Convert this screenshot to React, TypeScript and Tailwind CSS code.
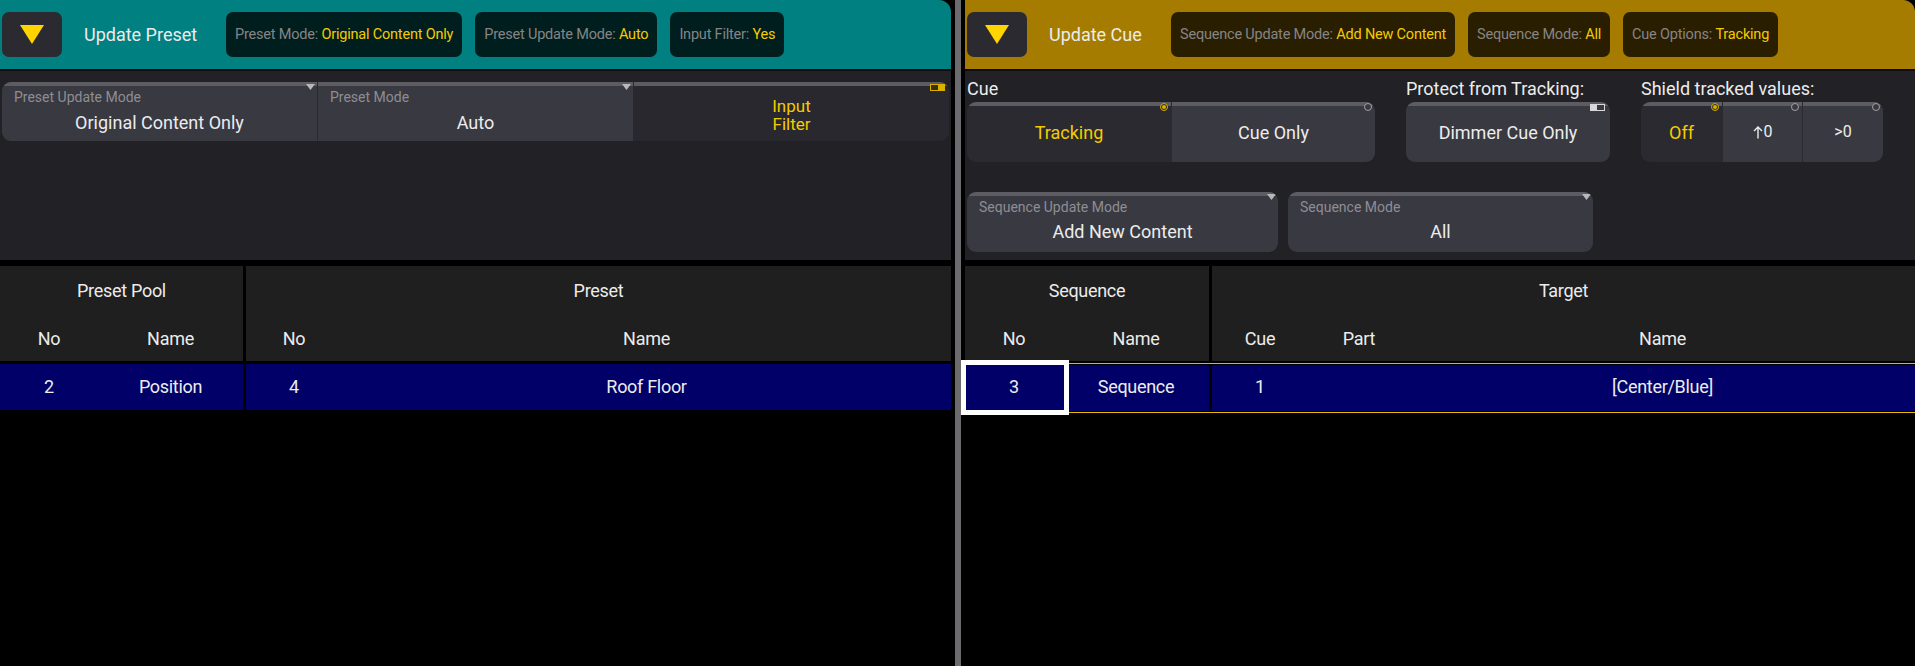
import React from "react";

const font = { fontFamily: "Roboto, 'Noto Sans', sans-serif" };

function DropBtn() {
  return (
    <div className="w-[60px] h-[45px] bg-[#2a2a30] rounded-[7px] flex items-center justify-center">
      <svg width="24" height="19" viewBox="0 0 24 19">
        <polygon points="0,0 24,0 12,19" fill="#ffd400" />
      </svg>
    </div>
  );
}

function Chip({ label, value, bg }: { label: string; value: string; bg: string }) {
  return (
    <div className={`h-[45px] rounded-[7px] px-[9px] flex items-center text-[14.5px] tracking-[-0.2px] whitespace-nowrap ${bg}`}>
      <span className="text-[#858585]">{label}:&nbsp;</span>
      <span className="text-[#f2cc00]">{value}</span>
    </div>
  );
}

function DownTri() {
  return (
    <svg className="absolute right-[2px] top-[2px]" width="9" height="6" viewBox="0 0 9 6">
      <polygon points="0,0 9,0 4.5,6" fill="#b8b8bc" />
    </svg>
  );
}

function Radio({ on }: { on: boolean }) {
  return (
    <div
      className={`absolute right-[3px] top-[1px] w-[8px] h-[8px] rounded-full border ${
        on ? "border-[#d9b200] bg-[#2a2a30]" : "border-[#a0a0a4] bg-[#393942]"
      } flex items-center justify-center`}
    >
      {on && <div className="w-[4px] h-[4px] rounded-full bg-[#d9b200]" />}
    </div>
  );
}

function SelectBtn({ label, value, w, pb = "pb-[6px]" }: { label: string; value: string; w: string; pb?: string }) {
  return (
    <div className={`relative ${w} h-full bg-[#393942] flex flex-col`}>
      <div className="h-[4px] bg-[#5c5c62]" />
      <DownTri />
      <div className="text-[14px] text-[#8e8e92] pl-[12px] pt-[3px] leading-[17px]">{label}</div>
      <div className={`flex-1 flex items-center justify-center text-[18px] text-[#ececec] ${pb}`}>{value}</div>
    </div>
  );
}

function UpArrow() {
  return (
    <svg width="10" height="13" viewBox="0 0 10 13" className="mr-[1px]">
      <path d="M5 12.5V1M1 5L5 1L9 5" stroke="#ececec" strokeWidth="1.4" fill="none" />
    </svg>
  );
}

function LeftPanel() {
  return (
    <div className="w-[951px] flex flex-col">
      <div className="h-[69px] bg-[#008080] rounded-tr-[12px] flex items-center pl-[2px] gap-[13px]">
        <DropBtn />
        <div className="text-[18px] text-[#ececec] w-[138px] pl-[9px]">Update Preset</div>
        <Chip label="Preset Mode" value="Original Content Only" bg="bg-[#001e1e]" />
        <Chip label="Preset Update Mode" value="Auto" bg="bg-[#001e1e]" />
        <Chip label="Input Filter" value="Yes" bg="bg-[#001e1e]" />
      </div>
      <div className="h-[2px] bg-[#0c0c0e]" />
      <div className="h-[189px] bg-[#212126] pt-[11px] px-[2px]">
        <div className="h-[59px] flex rounded-[9px] overflow-hidden gap-[1px] bg-[#28282e]">
          <SelectBtn label="Preset Update Mode" value="Original Content Only" w="w-[315px]" pb="pb-[2px]" />
          <SelectBtn label="Preset Mode" value="Auto" w="w-[315px]" pb="pb-[2px]" />
          <div className="relative flex-1 bg-[#28282e] flex flex-col">
            <div className="h-[4px] bg-[#5c5c62]" />
            <div className="absolute right-[4px] top-[2px] w-[15px] h-[7px] bg-[#d9b200] p-[1px]">
              <div className="w-[7px] h-full bg-[#3a3000]" />
            </div>
            <div className="flex-1 flex flex-col items-center justify-center text-[17px] text-[#f2cc00] leading-[18px] text-center pt-[2px]">
              <span>Input</span>
              <span>Filter</span>
            </div>
          </div>
        </div>
      </div>
      <div className="h-[6px] bg-black" />
      <div className="flex h-[95px] text-[18px] tracking-[-0.3px] text-[#ececec]">
        <div className="w-[243px] bg-[#1f1f1f] flex flex-col">
          <div className="flex-1 flex items-center justify-center pt-[2px]">Preset Pool</div>
          <div className="flex-1 flex items-center pt-[2px]">
            <div className="w-[98px] text-center">No</div>
            <div className="flex-1 text-center">Name</div>
          </div>
        </div>
        <div className="w-[3px] bg-black" />
        <div className="flex-1 bg-[#1f1f1f] flex flex-col">
          <div className="flex-1 flex items-center justify-center pt-[2px]">Preset</div>
          <div className="flex-1 flex items-center pt-[2px]">
            <div className="w-[96px] text-center">No</div>
            <div className="flex-1 text-center">Name</div>
          </div>
        </div>
      </div>
      <div className="h-[3px] bg-black" />
      <div className="flex h-[46px] text-[18px] tracking-[-0.3px] text-[#ececec]">
        <div className="w-[243px] bg-[#000068] flex items-center pb-[2px]">
          <div className="w-[98px] text-center">2</div>
          <div className="flex-1 text-center">Position</div>
        </div>
        <div className="w-[3px] bg-black" />
        <div className="flex-1 bg-[#000068] flex items-center pb-[2px]">
          <div className="w-[96px] text-center">4</div>
          <div className="flex-1 text-center">Roof Floor</div>
        </div>
      </div>
    </div>
  );
}

function RightPanel() {
  return (
    <div className="w-[950px] flex flex-col">
      <div className="h-[69px] bg-[#a67c00] rounded-tr-[12px] flex items-center pl-[2px] gap-[13px]">
        <DropBtn />
        <div className="text-[18px] text-[#ececec] w-[118px] pl-[9px]">Update Cue</div>
        <Chip label="Sequence Update Mode" value="Add New Content" bg="bg-[#2a1e00]" />
        <Chip label="Sequence Mode" value="All" bg="bg-[#2a1e00]" />
        <Chip label="Cue Options" value="Tracking" bg="bg-[#2a1e00]" />
      </div>
      <div className="h-[2px] bg-[#0c0c0e]" />
      <div className="h-[189px] bg-[#212126] pl-[2px] pt-[4px] flex flex-col">
        <div className="flex">
          <div className="w-[408px] flex flex-col">
            <div className="h-[27px] text-[18px] text-[#ececec] flex items-center">Cue</div>
            <div className="h-[60px] flex rounded-[9px] overflow-hidden">
              <div className="relative w-[204px] bg-[#2a2a30] flex flex-col">
                <div className="h-[4px] bg-[#5c5c62]" />
                <Radio on />
                <div className="flex-1 flex items-center justify-center text-[18px] text-[#f2cc00] pb-[4px]">Tracking</div>
              </div>
              <div className="relative w-[204px] bg-[#393942] flex flex-col border-l border-[#2a2a30]">
                <div className="h-[4px] bg-[#5c5c62]" />
                <Radio on={false} />
                <div className="flex-1 flex items-center justify-center text-[18px] text-[#ececec] pb-[4px]">Cue Only</div>
              </div>
            </div>
          </div>
          <div className="w-[204px] ml-[31px] flex flex-col">
            <div className="h-[27px] text-[18px] text-[#ececec] flex items-center whitespace-nowrap">Protect from Tracking:</div>
            <div className="relative h-[60px] rounded-[9px] overflow-hidden bg-[#393942] flex flex-col">
              <div className="h-[4px] bg-[#5c5c62]" />
              <div className="absolute right-[5px] top-[2px] w-[15px] h-[7px] bg-[#d8d8dc] p-[1px] flex justify-end">
                <div className="w-[7px] h-full bg-[#393942]" />
              </div>
              <div className="flex-1 flex items-center justify-center text-[18px] text-[#ececec] pb-[4px]">Dimmer Cue Only</div>
            </div>
          </div>
          <div className="w-[242px] ml-[31px] flex flex-col">
            <div className="h-[27px] text-[18px] text-[#ececec] flex items-center whitespace-nowrap">Shield tracked values:</div>
            <div className="h-[60px] flex rounded-[9px] overflow-hidden">
              <div className="relative w-[81px] bg-[#2a2a30] flex flex-col">
                <div className="h-[4px] bg-[#5c5c62]" />
                <Radio on />
                <div className="flex-1 flex items-center justify-center text-[18px] text-[#f2cc00] pb-[4px]">Off</div>
              </div>
              <div className="relative w-[80px] bg-[#393942] flex flex-col border-l border-[#2a2a30]">
                <div className="h-[4px] bg-[#5c5c62]" />
                <Radio on={false} />
                <div className="flex-1 flex items-center justify-center text-[16px] text-[#ececec] pb-[4px]">
                  <UpArrow />
                  <span>0</span>
                </div>
              </div>
              <div className="relative w-[81px] bg-[#393942] flex flex-col border-l border-[#2a2a30]">
                <div className="h-[4px] bg-[#5c5c62]" />
                <Radio on={false} />
                <div className="flex-1 flex items-center justify-center text-[16px] text-[#ececec] pb-[4px]">&gt;0</div>
              </div>
            </div>
          </div>
        </div>
        <div className="flex mt-[30px] gap-[10px] h-[60px]">
          <div className="rounded-[9px] overflow-hidden h-full">
            <SelectBtn label="Sequence Update Mode" value="Add New Content" w="w-[311px]" />
          </div>
          <div className="rounded-[9px] overflow-hidden h-full">
            <SelectBtn label="Sequence Mode" value="All" w="w-[305px]" />
          </div>
        </div>
      </div>
      <div className="h-[6px] bg-black" />
      <div className="flex h-[95px] text-[18px] tracking-[-0.3px] text-[#ececec]">
        <div className="w-[244px] bg-[#1f1f1f] flex flex-col">
          <div className="flex-1 flex items-center justify-center pt-[2px]">Sequence</div>
          <div className="flex-1 flex items-center pt-[2px]">
            <div className="w-[98px] text-center">No</div>
            <div className="flex-1 text-center">Name</div>
          </div>
        </div>
        <div className="w-[3px] bg-black" />
        <div className="flex-1 bg-[#1f1f1f] flex flex-col">
          <div className="flex-1 flex items-center justify-center pt-[2px]">Target</div>
          <div className="flex-1 flex items-center pt-[2px]">
            <div className="w-[96px] text-center">Cue</div>
            <div className="w-[102px] text-center">Part</div>
            <div className="flex-1 text-center">Name</div>
          </div>
        </div>
      </div>
      <div className="h-[2px] bg-black" />
      <div className="relative h-[50px] border-y border-[#e6b800] bg-black flex flex-col justify-center">
        <div className="flex h-[46px] text-[18px] tracking-[-0.3px] text-[#ececec]">
          <div className="w-[244px] bg-[#000068] flex items-center pb-[3px]">
            <div className="w-[98px] text-center">3</div>
            <div className="flex-1 text-center">Sequence</div>
          </div>
          <div className="w-[3px] bg-black" />
          <div className="flex-1 bg-[#000068] flex items-center pb-[3px]">
            <div className="w-[96px] text-center">1</div>
            <div className="w-[102px]" />
            <div className="flex-1 text-center">[Center/Blue]</div>
          </div>
        </div>
        <div className="absolute left-[-4px] top-[-4px] w-[108px] h-[55px] border-[5px] border-white" />
      </div>
    </div>
  );
}

export default function App() {
  return (
    <div className="w-[1915px] h-[666px] bg-black flex overflow-hidden" style={font}>
      <LeftPanel />
      <div className="w-[4px]" />
      <div className="w-[6px] h-full bg-[#6b6b70]" />
      <div className="w-[4px]" />
      <RightPanel />
    </div>
  );
}
